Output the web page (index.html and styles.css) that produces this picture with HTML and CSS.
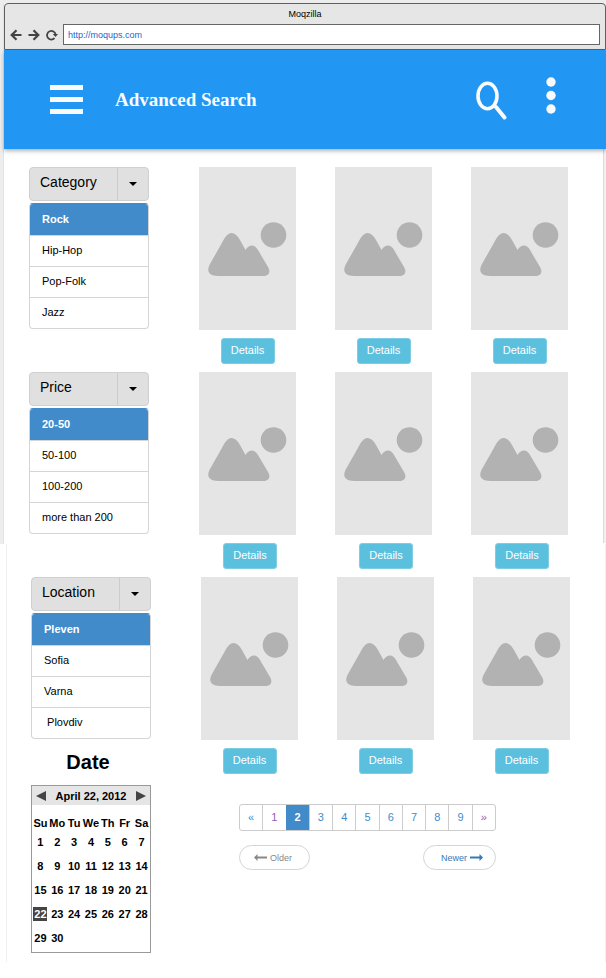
FILE: index.html
```html
<!DOCTYPE html>
<html lang="en">
<head>
<meta charset="utf-8">
<title>Moqzilla</title>
<link rel="stylesheet" href="styles.css">
</head>
<body>
<svg class="symbols" aria-hidden="true">
  <symbol id="picture" viewBox="0 0 80 56">
    <path d="M10 54 C1 54 -2 49 2 42 L15 19 Q19 11 23.500 11 Q28 11 32 18 L37.500 28 Q40 23.500 44 23.500 Q47.500 23.500 50 28 L60 45 C63 50 61 54 55 54 Z"/>
    <circle cx="65.500" cy="13" r="12.800"/>
  </symbol>
  <symbol id="arrow" viewBox="0 0 12 12">
    <path d="M11.500 6H2M6.500 1.200L1.700 6L6.500 10.800" fill="none" stroke="currentColor" stroke-width="2.200"/>
  </symbol>
  <symbol id="long-arrow" viewBox="0 0 13 7">
    <path d="M0 3.500L3.500 0V2.500H13V4.500H3.500V7Z" fill="currentColor"/>
  </symbol>
</svg>
<div class="page">
  <div class="chrome">
    <div class="chrome-title">Moqzilla</div>
    <div class="chrome-bar">
      <button class="chrome-button" aria-label="Back"><svg><use href="#arrow"/></svg></button>
      <button class="chrome-button" aria-label="Forward"><svg class="flip"><use href="#arrow"/></svg></button>
      <button class="chrome-button" aria-label="Reload"><svg viewBox="0 0 12 12"><path d="M8.500 9.200A4.300 4.300 0 1 1 9.600 5.500" fill="none" stroke="currentColor" stroke-width="1.800"/><path d="M6.800 5H12L9.500 8Z" fill="currentColor"/></svg></button>
      <input class="address" type="text" aria-label="Address" value="http://moqups.com">
    </div>
  </div>

  <header class="app-bar">
    <button class="icon-button" aria-label="Menu"><svg class="icon-menu" viewBox="0 0 33 29"><path d="M0 0H33V5H0ZM0 12H33V17H0ZM0 24H33V29H0Z"/></svg></button>
    <h1 class="app-title">Advanced Search</h1>
    <button class="icon-button" aria-label="Search"><svg class="icon-search" viewBox="0 0 31 39"><ellipse cx="11.500" cy="15" rx="9.500" ry="12.800" fill="none" stroke="#fafafa" stroke-width="3.600"/><path d="M20 26L28.500 36.500" stroke="#fafafa" stroke-width="4" stroke-linecap="round"/></svg></button>
    <button class="icon-button" aria-label="More"><svg class="icon-more" viewBox="0 0 10 37"><circle cx="5" cy="5" r="4.700"/><circle cx="5" cy="18.500" r="4.700"/><circle cx="5" cy="32" r="4.700"/></svg></button>
  </header>

  <main>
    <section class="band">
      <div class="filter">
        <button class="filter-head"><span class="filter-name">Category</span><span class="filter-caret"></span></button>
        <ul class="options">
          <li><button class="option selected">Rock</button></li>
          <li><button class="option">Hip-Hop</button></li>
          <li><button class="option">Pop-Folk</button></li>
          <li><button class="option">Jazz</button></li>
        </ul>
      </div>
      <div class="cards">
        <article class="card"><div class="thumb"><svg><use href="#picture"/></svg></div><button class="details">Details</button></article>
        <article class="card"><div class="thumb"><svg><use href="#picture"/></svg></div><button class="details">Details</button></article>
        <article class="card"><div class="thumb"><svg><use href="#picture"/></svg></div><button class="details">Details</button></article>
      </div>
    </section>

    <section class="band">
      <div class="filter">
        <button class="filter-head"><span class="filter-name">Price</span><span class="filter-caret"></span></button>
        <ul class="options">
          <li><button class="option selected">20-50</button></li>
          <li><button class="option">50-100</button></li>
          <li><button class="option">100-200</button></li>
          <li><button class="option">more than 200</button></li>
        </ul>
      </div>
      <div class="cards shifted">
        <article class="card"><div class="thumb"><svg><use href="#picture"/></svg></div><button class="details">Details</button></article>
        <article class="card"><div class="thumb"><svg><use href="#picture"/></svg></div><button class="details">Details</button></article>
        <article class="card"><div class="thumb"><svg><use href="#picture"/></svg></div><button class="details">Details</button></article>
      </div>
    </section>

    <section class="band band-last">
      <div class="filter">
        <button class="filter-head"><span class="filter-name">Location</span><span class="filter-caret"></span></button>
        <ul class="options">
          <li><button class="option selected">Pleven</button></li>
          <li><button class="option">Sofia</button></li>
          <li><button class="option">Varna</button></li>
          <li><button class="option">&nbsp;Plovdiv</button></li>
        </ul>
        <h2 class="date-title">Date</h2>
        <div class="calendar">
          <div class="calendar-head">
            <button class="step" aria-label="Previous month"><svg viewBox="0 0 10 10"><path d="M10 0V10L0 5Z"/></svg></button>
            <span>April 22, 2012</span>
            <button class="step" aria-label="Next month"><svg viewBox="0 0 10 10"><path d="M0 0V10L10 5Z"/></svg></button>
          </div>
          <table class="days">
            <thead><tr><th>Su</th><th>Mo</th><th>Tu</th><th>We</th><th>Th</th><th>Fr</th><th>Sa</th></tr></thead>
            <tbody>
              <tr><td>1</td><td>2</td><td>3</td><td>4</td><td>5</td><td>6</td><td>7</td></tr>
              <tr><td>8</td><td>9</td><td>10</td><td>11</td><td>12</td><td>13</td><td>14</td></tr>
              <tr><td>15</td><td>16</td><td>17</td><td>18</td><td>19</td><td>20</td><td>21</td></tr>
              <tr><td><span class="today">22</span></td><td>23</td><td>24</td><td>25</td><td>26</td><td>27</td><td>28</td></tr>
              <tr><td>29</td><td>30</td><td></td><td></td><td></td><td></td><td></td></tr>
            </tbody>
          </table>
        </div>
      </div>
      <div class="results">
        <div class="cards">
          <article class="card"><div class="thumb"><svg><use href="#picture"/></svg></div><button class="details">Details</button></article>
          <article class="card"><div class="thumb"><svg><use href="#picture"/></svg></div><button class="details">Details</button></article>
          <article class="card"><div class="thumb"><svg><use href="#picture"/></svg></div><button class="details">Details</button></article>
        </div>
        <nav class="paging" aria-label="Pages">
          <div class="pages">
            <a href="#">«</a><a href="#" class="visited">1</a><a href="#" class="current">2</a><a href="#">3</a><a href="#">4</a><a href="#">5</a><a href="#">6</a><a href="#">7</a><a href="#">8</a><a href="#">9</a><a href="#" class="visited">»</a>
          </div>
          <div class="pager">
            <a href="#" class="older"><svg><use href="#long-arrow"/></svg>Older</a>
            <a href="#">Newer<svg class="flip"><use href="#long-arrow"/></svg></a>
          </div>
        </nav>
      </div>
    </section>
  </main>
</div>
</body>
</html>
```
FILE: styles.css
```css
* { box-sizing: border-box; }

body {
  margin: 0;
  background: #fff;
  color: #000;
  font-family: "Liberation Sans", Arial, sans-serif;
  font-size: 11px;
}

button { padding: 0; border: 0; background: none; color: inherit; font: inherit; cursor: pointer; }
a { color: #428bca; text-decoration: none; }
svg { display: block; }
.symbols { position: absolute; width: 0; height: 0; }
.flip { transform: scaleX(-1); }

.page {
  padding: 3px 0 10px 4px;
  background:
    linear-gradient(#ededed, #ededed) 0 0 / 100% 3px no-repeat,
    linear-gradient(90deg, #ededed 3px, #e2e2e2 3px) 0 0 / 4px 544px no-repeat,
    linear-gradient(90deg, #dcdcdc 1px, #f0f0f0 1px) 100% 0 / 3px 543px no-repeat,
    linear-gradient(#f0f0f0, #f0f0f0) 6px 544px / 1px 418px no-repeat,
    linear-gradient(#f0f0f0, #f0f0f0) 100% 544px / 1px 418px no-repeat;
}

/* Browser frame */
.chrome {
  height: 47px;
  padding: 0 5px;
  border: 1px solid #5f5f5f;
  border-radius: 4px 4px 0 0;
  background: #e6e6e6;
}
.chrome-title { height: 20px; font-size: 9px; line-height: 20px; text-align: center; }
.chrome-bar { display: flex; align-items: center; }
.chrome-button { width: 12px; margin-right: 6px; color: #444; }
.chrome-button svg { width: 12px; height: 12px; }
.address {
  flex: 1;
  min-width: 0;
  height: 21px;
  margin-left: -1px;
  padding: 0 4px;
  border: 1px solid #666;
  background: #fff;
  color: #1f5fd0;
  font: 9px "Liberation Sans", Arial, sans-serif;
}

/* Application bar */
.app-bar {
  display: flex;
  align-items: center;
  height: 99px;
  padding: 0 50px 0 46px;
  background: #2196f3;
  box-shadow: 0 2px 4px rgba(0, 0, 0, 0.3);
}
.icon-button { fill: #fafafa; }
.icon-menu { width: 33px; height: 29px; }
.icon-search { width: 31px; height: 39px; margin: 2px 39px 0 0; }
.icon-more { width: 10px; height: 37px; margin-bottom: 8px; }
.app-title {
  flex: 1;
  margin: 0 0 0 32px;
  color: #fafafa;
  font: bold 19px/24px "Liberation Serif", "Times New Roman", serif;
}

/* Filter and result bands */
.band {
  display: grid;
  grid-template-columns: 120px 1fr;
  gap: 50px;
  padding: 0 38px 8px 25px;
}
main { padding-top: 18px; }
.band-last { padding: 0 36px 0 27px; }

.filter-head {
  display: flex;
  width: 120px;
  height: 34px;
  border: 1px solid #d0d0d0;
  border-radius: 4px;
  background: #e0e0e0;
  font-size: 14px;
  line-height: 28px;
  text-align: left;
}
.filter-name { flex: 1; padding-left: 10px; }
.filter-caret {
  display: flex;
  align-items: center;
  justify-content: center;
  align-self: stretch;
  width: 31px;
  border-left: 1px solid #ccc;
}
.filter-caret::before {
  content: "";
  border: 4px solid transparent;
  border-top-color: #000;
  border-bottom: 0;
}

.options {
  margin: 2px 0 0;
  padding: 0;
  border: 1px solid #d5d5d5;
  border-radius: 4px;
  overflow: hidden;
  list-style: none;
}
.options li + li { border-top: 1px solid #d5d5d5; }
.option { display: block; width: 100%; height: 30px; padding: 0 0 2px 12px; text-align: left; }
.option.selected { height: 31px; background: #428bca; color: #fff; font-weight: bold; }
.options:has(.selected) { border-top-color: #428bca; }

.cards { display: flex; justify-content: space-between; }
.card { width: 97px; }
.thumb {
  display: flex;
  align-items: center;
  justify-content: center;
  height: 163px;
  padding-top: 2px;
  background: #e5e5e5;
}
.thumb svg { width: 80px; height: 56px; fill: #b2b2b2; }
.details {
  display: block;
  width: 54px;
  height: 26px;
  margin: 8px auto 0;
  padding-bottom: 2px;
  border: 1px solid #7fcde4;
  border-radius: 3px;
  background: #5bc0de;
  color: #fff;
}
.shifted .details { margin-left: 24px; }

/* Date picker */
.date-title { margin: 11px 6px 11px 0; font-size: 20px; line-height: 24px; text-align: center; }
.calendar { height: 168px; border: 1px solid #999; font-weight: bold; }
.calendar-head {
  display: flex;
  align-items: center;
  justify-content: space-between;
  height: 19px;
  padding: 0 4px;
  background: #e5e5e5;
}
.step svg { width: 10px; height: 10px; fill: #444; }
.days { width: 100%; margin-top: 11px; border-collapse: collapse; table-layout: fixed; text-align: center; }
.days th { height: 14px; padding: 0; }
.days td { height: 24px; padding: 0; }
.today { display: block; width: 14px; margin: 0 auto; background: #444; color: #fff; line-height: 14px; }

/* Paging */
.paging { width: 257px; margin: 30px auto 0 38px; }
.pages { display: flex; height: 27px; border: 1px solid #ccc; border-radius: 3px; }
.pages a { flex: 1; line-height: 25px; text-align: center; }
.pages a + a { border-left: 1px solid #ccc; }
.pages .current { border-color: #428bca; background: #428bca; color: #fff; font-weight: bold; }
.pages .visited { color: #8a5fb5; }
.pager { display: flex; justify-content: space-between; margin-top: 14px; }
.pager a {
  display: flex;
  align-items: center;
  justify-content: flex-end;
  gap: 3px;
  width: 73px;
  height: 25px;
  padding: 0 12px;
  border: 1px solid #d5d5d5;
  border-radius: 13px;
  color: #337ab7;
  font-size: 9px;
}
.pager .older { width: 71px; padding: 0 17px; color: #888; }
.pager svg { width: 13px; height: 7px; flex: none; }
```
